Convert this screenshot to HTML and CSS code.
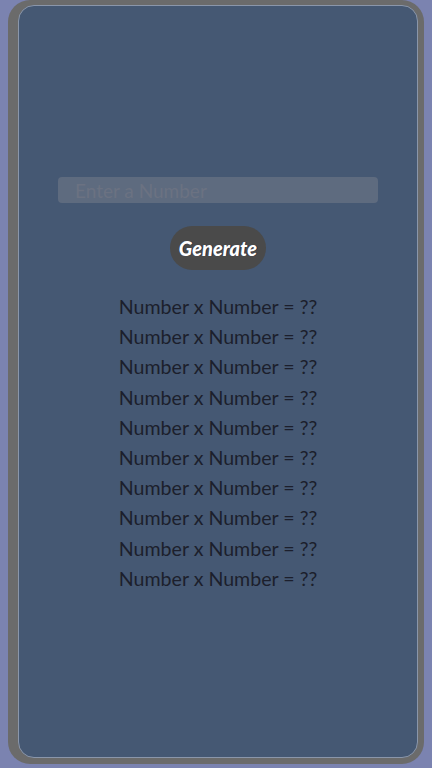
FILE: index.html
```html
<!DOCTYPE html>
<html lang="en">

<head>
  <meta charset="UTF-8">
  <meta name="viewport" content="width=device-width, initial-scale=1.0">
  <title>Multiplication Table</title>
  <link rel="stylesheet" href="styles.css">
</head>

<body>
  <div class="frame">
    <div class="panel">
      <input type="text" class="number-input" placeholder="Enter a Number">
      <button class="generate">Generate</button>
      <div class="table">
        <p>Number x Number = ??</p>
        <p>Number x Number = ??</p>
        <p>Number x Number = ??</p>
        <p>Number x Number = ??</p>
        <p>Number x Number = ??</p>
        <p>Number x Number = ??</p>
        <p>Number x Number = ??</p>
        <p>Number x Number = ??</p>
        <p>Number x Number = ??</p>
        <p>Number x Number = ??</p>
      </div>
    </div>
  </div>
</body>

</html>
```

FILE: styles.css
```css
html,
body {
  height: 100%;
}

body {
  margin: 0;
  background-color: #7b83b0;
  font-family: 'Lato', sans-serif;
}

.frame {
  box-sizing: border-box;
  width: 416px;
  height: 764px;
  margin-left: 8px;
  padding: 5px 6px 6px 10px;
  background-color: #6b6b6b;
  border-radius: 22px;
}

.panel {
  box-sizing: border-box;
  height: 100%;
  background-color: #455873;
  border: 1px solid #8a96aa;
  border-radius: 16px;
  display: flex;
  flex-direction: column;
  align-items: center;
  padding-top: 171px;
}

.number-input {
  box-sizing: border-box;
  width: 320px;
  height: 26px;
  padding: 0 17px;
  border: none;
  border-radius: 4px;
  background-color: #5e6b7f;
  font-family: 'Lato', sans-serif;
  font-size: 19px;
  outline: none;
}

.number-input::placeholder {
  color: #6b7282;
}

.generate {
  margin-top: 23px;
  width: 96px;
  height: 44px;
  padding: 0;
  border: none;
  border-radius: 22px;
  background-color: #4a4a4a;
  color: #fff;
  font-family: 'Lato', sans-serif;
  font-size: 20px;
  font-weight: 900;
  font-style: italic;
  text-shadow: 1px 0 0 #2a2a3a;
}

.table {
  margin-top: 22px;
  text-align: center;
}

.table p {
  margin: 0;
  color: #1c1f2c;
  font-size: 19.6px;
  line-height: 30.2px;
}
```
